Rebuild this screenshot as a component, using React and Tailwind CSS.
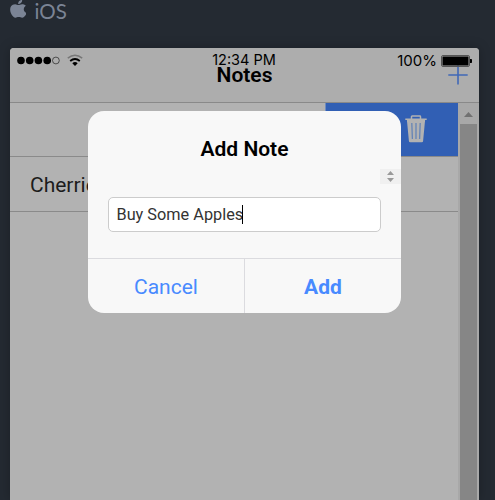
import React from 'react';

function PlatformLabel() {
  return (
    <div className="flex h-12 items-start pl-[10px] text-[#7b8495]">
      <svg className="h-[18px] w-4 shrink-0" viewBox="1.1 0.4 14.2 17.8" preserveAspectRatio="none" fill="currentColor">
        <path d="M13.3 9.6c0-2.2 1.8-3.3 1.9-3.4-1-1.5-2.6-1.7-3.2-1.7-1.4-.1-2.7.8-3.4.8-.7 0-1.8-.8-2.9-.8C4.200 4.500 2.800 5.400 2 6.700c-1.600 2.700-.4 6.800 1.100 9C3.900 16.800 4.700 18 5.900 18c1.100 0 1.600-.7 3-.7s1.800.7 3 .7 2-1.100 2.800-2.200c.6-.9 1-1.800 1.200-2.400-.1 0-2.600-1-2.600-3.800zM11 3.100c.6-.8 1-1.800.9-2.900-.9 0-2 .6-2.600 1.300-.6.7-1.100 1.700-.9 2.800 1 .1 2-.5 2.600-1.200z" />
      </svg>
      <span className="ml-[8.5px] font-['Lato',sans-serif] text-[20.5px] leading-[22px]">iOS</span>
    </div>
  );
}

function StatusBar() {
  return (
    <div className="absolute inset-x-0 top-0 grid h-6 grid-cols-3 items-center pl-[7px] pr-[7px] font-['Inter',sans-serif] text-[14.5px] leading-6 text-black">
      <div className="flex items-center">
        <svg className="h-[10px] w-[45px]" viewBox="0 0 45 10">
          <circle cx="4" cy="5.500" r="3.8" />
          <circle cx="12.7" cy="5.500" r="3.8" />
          <circle cx="21.400" cy="5.500" r="3.800" />
          <circle cx="30.200" cy="5.500" r="3.800" />
          <circle cx="38.900" cy="5.500" r="3.400" fill="none" stroke="#222" strokeWidth=".7" />
        </svg>
        <svg className="ml-[5px] h-3 w-4" viewBox="0 0 16 12" fill="none">
          <path d="M.8 4.200Q8-1.800 15.200 4.200" stroke="#777" strokeWidth="1.500" />
          <path d="M3.200 7Q8 3 12.800 7" stroke="#000" strokeWidth="1.800" />
          <path d="M5.300 9.200Q8 7 10.700 9.200L8 11.900Z" fill="#000" />
        </svg>
      </div>
      <div className="-ml-px whitespace-nowrap text-center">12:34 PM</div>
      <div className="flex h-6 items-center justify-end gap-[4px]">
        <span className="pt-px text-[15px] leading-6">100%</span>
        <svg className="mt-px h-3 w-[31px]" viewBox="0 0 31 12">
          <rect x=".5" y=".5" width="28" height="11" rx="1.500" fill="none" stroke="#555" />
          <rect x="1.500" y="1.500" width="26" height="9" rx=".5" />
          <path d="M29 4h1.300q.7 0 .7.700v2.600q0 .7-.7.700H29z" />
        </svg>
      </div>
    </div>
  );
}

function Header() {
  return (
    <header className="relative h-[55px] border-b border-[#898989] bg-[#adadad]">
      <StatusBar />
      <div className="grid h-[54px] grid-cols-3 items-center">
        <h1 className="col-start-2 text-center text-[21px] font-semibold leading-6 text-black">Notes</h1>
        <svg className="mr-[11px] h-5 w-5 justify-self-end" viewBox="0 0 20 20" stroke="#4068b7" strokeWidth="1.600">
          <path d="M.3 10h19.400M10 .5v19" />
        </svg>
      </div>
    </header>
  );
}

function TrashIcon() {
  return (
    <svg className="h-7 w-[22px]" viewBox="0 0 22 28" fill="none">
      <path d="M6.500 4V1.700Q6.500 1 7.200 1h7.600q.7 0 .7.700V4" stroke="#b2b2b2" strokeWidth="1.500" />
      <path d="M.3 3.500h21.400V5H.3zM1.900 5h18.200l-2 21q-.1 1.300-1.300 1.300H5.200q-1.200 0-1.300-1.300z" fill="#b2b2b2" />
      <path d="M6.800 8l.6 16M11 8v16M15.200 8l-.6 16" stroke="#6584b6" strokeWidth="1.300" />
    </svg>
  );
}

function Scrollbar() {
  return (
    <div className="w-[21px] shrink-0 bg-[#a8a8a8] px-[2px]">
      <div className="flex h-[21px] items-center justify-center">
        <svg className="mr-[1px] mt-[2px] h-[5px] w-[9px]" viewBox="0 0 9 5" fill="#717171">
          <path d="M4.500 0L9 5H0z" />
        </svg>
      </div>
      <div className="h-full bg-[#868686]" />
    </div>
  );
}

function NotesList() {
  return (
    <div className="flex h-[397px] overflow-hidden">
      <div className="flex-1">
        <div className="flex h-[54px] justify-end border-b border-[#8a8a8a]">
          <div className="flex w-[133px] items-center justify-center border-l border-[#6e8cc0] bg-[#315fb4] pl-[48px] pb-[2px]">
            <TrashIcon />
          </div>
        </div>
        <div className="flex h-[55px] items-center border-b border-[#8a8a8a] pl-5 pt-[4px] text-[21px] text-[#1c1c1c]">Cherries</div>
      </div>
      <Scrollbar />
    </div>
  );
}

function AddNoteDialog() {
  return (
    <div className="absolute left-[88px] top-[111px] flex h-[202px] w-[313px] flex-col overflow-hidden rounded-2xl bg-[#f8f8f8]">
      <h2 className="pt-[26px] text-center text-[21px] font-semibold leading-6 text-black">Add Note</h2>
      <div className="mt-2 flex h-[15px] w-[21px] items-center justify-center self-end bg-[#f0f0f0]">
        <svg className="h-[11px] w-[7px]" viewBox="0 0 7 11" fill="#999">
          <path d="M3.500 0L7 4H0zM0 7h7l-3.500 4z" />
        </svg>
      </div>
      <div className="mx-5 mt-[13px] flex h-[35px] items-center rounded-[5px] border border-[#ccc] bg-white pl-[7.5px] text-[16.3px] text-[#333]">
        <span className="pt-[2px]">Buy Some Apples</span>
        <span className="-ml-[1.5px] h-[19px] w-px bg-black" />
      </div>
      <div className="mt-[26px] flex flex-1 border-t border-[#dbdbdf] text-[21px] text-[#488aff]">
        <button className="w-[157px] border-r border-[#dbdbdf] pt-[4px]">Cancel</button>
        <button className="flex-1 pt-[4px] font-bold">Add</button>
      </div>
    </div>
  );
}

export default function App() {
  return (
    <div className="relative h-[500px] w-[495px] overflow-hidden bg-[#242a32] font-['Roboto',sans-serif]">
      <PlatformLabel />
      <main className="ml-[10px] w-[469px] overflow-hidden rounded-t-[4px] bg-[#b2b2b2] shadow-[0_0_12px_rgba(0,0,0,0.25)]">
        <Header />
        <NotesList />
      </main>
      <AddNoteDialog />
    </div>
  );
}
